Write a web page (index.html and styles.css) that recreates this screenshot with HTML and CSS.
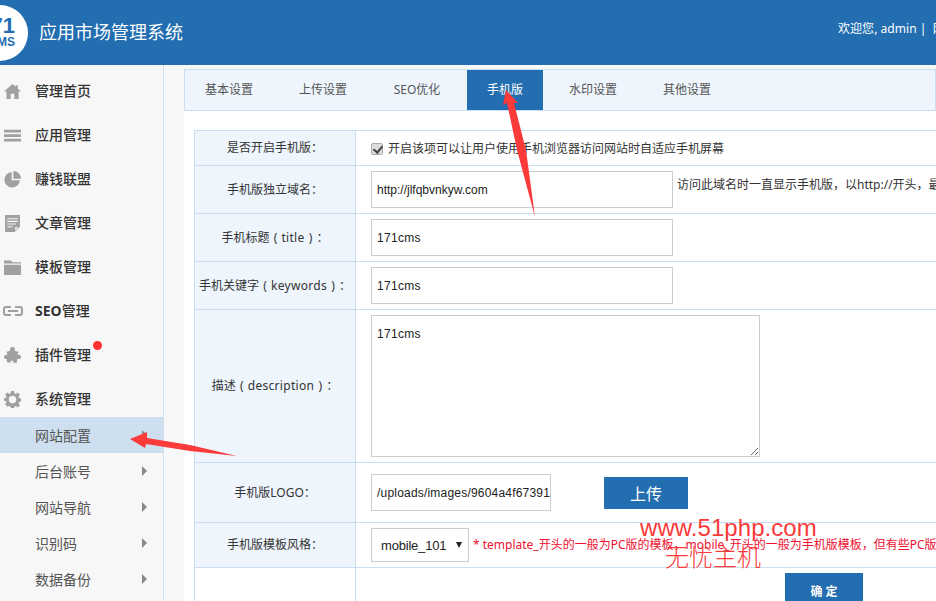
FILE: index.html
```html
<!DOCTYPE html>
<html lang="zh-CN">
<head>
<meta charset="utf-8">
<title>应用市场管理系统</title>
<link rel="stylesheet" href="styles.css">
</head>
<body>
<header class="topbar">
  <div class="logo"><span class="logo-num">71</span><span class="logo-ms">MS</span></div>
  <h1 class="title">应用市场管理系统</h1>
  <div class="welcome">欢迎您, admin&nbsp;|&nbsp;&nbsp;网站首页</div>
</header>
<div class="layout">
  <nav class="sidebar">
    <a class="nav-item"><svg class="ico" viewBox="0 0 16 16"><path d="M8 1 0 8h2.300v7h4V10h3.400v5h4V8H16l-3-2.600V2h-2v1.600z"/></svg>管理首页</a>
    <a class="nav-item"><svg class="ico" viewBox="0 0 16 16"><path d="M0 2.500h16v2.600H0zM0 6.800h16v2.600H0zM0 11h16v2.600H0z"/></svg>应用管理</a>
    <a class="nav-item"><svg class="ico" viewBox="0 0 16 16"><path d="M7.200 1a7.300 7.300 0 1 0 7.800 7.800H7.200zM8.800 0v7.200H16A7.400 7.400 0 0 0 8.800 0z"/></svg>赚钱联盟</a>
    <a class="nav-item"><svg class="ico" viewBox="0 0 16 16"><path fill-rule="evenodd" d="M1 0h14v11l-5 5H1zM3 3v1h10V3zM3 5.500v1h10v-1zM3 8v1h8V8zM3 10.500v1h5v-1zM10.500 11.500v3l3-3z"/></svg>文章管理</a>
    <a class="nav-item"><svg class="ico" viewBox="0 0 16 16"><path d="M0 1.500h6.500L8 3h8v1.300H0zM0 5.500h16V15H0z"/></svg>模板管理</a>
    <a class="nav-item"><svg class="ico ico-link" viewBox="0 0 20 10"><path fill="none" stroke="#a0a0a0" stroke-width="2" d="M8 1H3Q1 1 1 3v4q0 2 2 2h5M12 1h5q2 0 2 2v4q0 2-2 2h-5M5 5h10"/></svg><b class="seo">SEO</b>管理</a>
    <a class="nav-item"><svg class="ico" viewBox="0 0 16 16"><path d="M6 3.500C5 1.500 6.500 0 8 0s3 1.500 2 3.500l3.500 1-.6 3c1.700-.8 3.100.2 3.100 1.800s-1.500 2.700-3.400 1.700L12 15l-3.500-.5c.7-1.500-.2-1.500-1-1.500s-2 .5-1.300 2L2.500 14l.3-3C1.300 11.800 0 10.800 0 9.300s1.400-2.300 3-1.500L2.500 4.500z"/></svg>插件管理<i class="dot"></i></a>
    <a class="nav-item"><svg class="ico" viewBox="0 0 16 16"><path fill-rule="evenodd" d="M6.600 0h2.800l.4 2.200 1.300.6L13 1.500l2 2-1.300 1.900.6 1.300 2.200.4v2.800l-2.200.4-.6 1.300 1.300 1.900-2 2-1.900-1.300-1.300.6-.4 2.200H6.600l-.4-2.200-1.300-.6L3 14.500l-2-2 1.300-1.900-.6-1.300L-.5 9V6.800l2.200-.4.6-1.300L1 3.500l2-2 1.900 1.300 1.300-.6zM8 4.500a3.500 3.500 0 1 0 0 7 3.500 3.500 0 0 0 0-7z"/></svg>系统管理</a>
    <div class="sub-list">
      <a class="sub-item active">网站配置<i class="caret"></i></a>
      <a class="sub-item">后台账号<i class="caret"></i></a>
      <a class="sub-item">网站导航<i class="caret"></i></a>
      <a class="sub-item">识别码<i class="caret"></i></a>
      <a class="sub-item">数据备份<i class="caret"></i></a>
    </div>
  </nav>
  <main class="main">
    <div class="tabs">
      <a class="tab">基本设置</a>
      <a class="tab">上传设置</a>
      <a class="tab">SEO优化</a>
      <a class="tab on">手机版</a>
      <a class="tab">水印设置</a>
      <a class="tab">其他设置</a>
    </div>
    <div class="content">
      <table class="form">
        <tr class="r35"><th>是否开启手机版<span class="colon">：</span></th><td><label class="check-row"><input class="check" type="checkbox" checked>开启该项可以让用户使用手机浏览器访问网站时自适应手机屏幕</label></td></tr>
        <tr class="r48"><th>手机版独立域名<span class="colon">：</span></th><td><input class="field" type="text" value="http://jlfqbvnkyw.com"><span class="hint">访问此域名时一直显示手机版，以http://开头，最后不要带斜杠</span></td></tr>
        <tr class="r48"><th>手机标题<span class="pn">(</span><span class="lat">title</span><span class="pn">)</span><span class="colon">：</span></th><td><input class="field cms" type="text" value="171cms"></td></tr>
        <tr class="r48"><th>手机关键字<span class="pn">(</span><span class="lat">keywords</span><span class="pn">)</span><span class="colon">：</span></th><td><input class="field cms" type="text" value="171cms"></td></tr>
        <tr class="r153"><th>描述<span class="pn">(</span><span class="lat">description</span><span class="pn">)</span><span class="colon">：</span></th><td><textarea class="area">171cms</textarea></td></tr>
        <tr class="r60"><th>手机版LOGO<span class="colon">：</span></th><td><div class="upload-row"><input class="field short" type="text" value="/uploads/images/9604a4f67391a2b.png"><button class="btn-up" type="button">上传</button></div></td></tr>
        <tr class="r45"><th>手机版模板风格<span class="colon">：</span></th><td><span class="select-wrap"><select class="select"><option>mobile_101</option></select></span><span class="warn">* template_开头的一般为PC版的模板，mobile_开头的一般为手机版模板，但有些PC版模板也支持手机</span></td></tr>
        <tr class="r60 last"><th></th><td><button class="btn-ok" type="button">确 定</button></td></tr>
      </table>
    </div>
  </main>
</div>
<div class="wm wm-a">www.51php.com</div>
<div class="wm wm-b">无忧主机</div>
<svg class="arrows" width="936" height="601" viewBox="0 0 936 601">
  <path d="M506 90 518 103 514 103 526 150 535 217 517 150 507 103 503 105z" fill="#fb3a3a"/>
  <path d="M130 439 147 432 147 438 190 445 237 456 190 451 146 444 145 448z" fill="#fb3a3a"/>
</svg>
</body>
</html>
```
FILE: styles.css
```css
* { box-sizing: border-box; }
html, body { margin: 0; height: 601px; overflow: hidden; background: #f7f7f7; }
body { font-family: "Noto Sans", "Noto Sans CJK SC", sans-serif; font-size: 12px; color: #333; position: relative; width: 936px; text-spacing-trim: space-all; }

.topbar { height: 65px; background: #236db1; color: #fff; display: flex; align-items: center; overflow: hidden; }
.logo { flex: none; width: 56px; height: 56px; margin-left: -28px; border-radius: 50%; background: #fff; color: #236db1; display: flex; flex-direction: column; align-items: flex-end; padding: 10px 13px 0 0; font-family: "Liberation Sans", sans-serif; font-weight: 700; line-height: 1; }
.logo-num { font-size: 22px; }
.logo-ms { font-size: 12px; margin-top: -1px; }
.title { flex: none; margin: -4px 0 0 11px; width: 144px; font-size: 18px; font-weight: 400; white-space: nowrap; }
.welcome { flex: none; margin: -9px 0 0 655px; font-size: 12px; letter-spacing: .05px; white-space: nowrap; }

.layout { display: flex; height: 536px; }
.sidebar { flex: none; width: 164px; height: 536px; padding-top: 4px; border-right: 1px solid #cfe0ef; background: #f7f7f7; position: relative; }
.nav-item { display: flex; align-items: center; height: 44px; padding: 0 0 2px 4px; font-size: 14px; font-weight: 500; color: #333; position: relative; }
.ico { flex: none; width: 17px; height: 17px; margin: 2px 14px 0 0; fill: #a0a0a0; }
.ico-link { width: 20px; height: 10px; margin-left: -1px; margin-right: 12px; }
.seo { font-weight: 700; font-family: "Noto Sans", sans-serif; }
.dot { position: absolute; left: 93px; top: 8px; width: 9px; height: 9px; border-radius: 50%; background: #ff3030; }
.sub-list { margin-top: -4px; }
.sub-item { display: flex; align-items: center; height: 36px; padding: 0 16px 0 35px; font-size: 14px; color: #555; justify-content: space-between; }
.sub-item.active { background: #cee0ef; }
.caret { width: 0; height: 0; border-left: 5px solid #888; border-top: 5px solid transparent; border-bottom: 5px solid transparent; }

.main { flex: 1; min-width: 0; padding: 4px 0 0 20px; overflow: hidden; }
.tabs { display: flex; height: 42px; background: #eef5fd; border: 1px solid #c9dff1; color: #555; }
.tab { flex: none; min-width: 88px; height: 40px; line-height: 40px; padding: 0 20px; margin-right: 6px; font-size: 12px; text-align: center; }
.tab.on { min-width: 76px; background: #236db1; color: #fff; }
.content { height: 490px; background: #fff; padding: 19px 0 0 10px; }

.form { border-collapse: collapse; width: 1000px; table-layout: fixed; }
.form th, .form td { border: 1px solid #c9dff1; padding: 0; vertical-align: middle; }
.form th { width: 161px; padding-bottom: 2px; background: #eef5fd; font-size: 12px; font-weight: 400; color: #333; text-align: center; white-space: nowrap; }
.colon { font-family: "Noto Sans CJK TC", sans-serif; }
.pn { display: inline-block; width: 12px; text-align: center; }
.lat { letter-spacing: .3px; }
.form td { padding-left: 15px; white-space: nowrap; color: #333; }
.r35 { height: 35px; }
.r48 { height: 48px; }
.r153 { height: 153px; }
.r60 { height: 60px; }
.r45 { height: 45px; }
.last th { background: #fff; border-bottom: 0; }
.last td { vertical-align: top; padding-top: 5px; border-bottom: 0; }

.check-row { display: flex; align-items: center; }
.check { appearance: none; -webkit-appearance: none; flex: none; width: 12px; height: 12px; margin: 1px 5px 0 0; border: 1px solid #aaa; border-radius: 2px; background: #ddd; position: relative; }
.check::after { content: ""; position: absolute; left: 3px; top: 0; width: 4px; height: 7px; border: solid #444; border-width: 0 2px 2px 0; transform: rotate(40deg); }
.field { width: 302px; height: 37px; padding: 0 5px; border: 1px solid #ccc; background: #fff; font-family: "Liberation Sans", sans-serif; font-size: 12px; color: #222; outline: 0; vertical-align: middle; }
.field.cms { letter-spacing: .3px; }
.field.short { width: 180px; padding-right: 0; letter-spacing: .2px; }
.hint { display: inline-block; margin: -12px 0 0 4px; vertical-align: middle; font-size: 12px; }
.area { display: block; width: 389px; height: 142px; padding: 11px 5px; border: 1px solid #ccc; font-family: "Liberation Sans", sans-serif; font-size: 12px; letter-spacing: .3px; color: #222; outline: 0; }
.upload-row { display: flex; align-items: center; }
.btn-up { flex: none; width: 84px; height: 32px; margin-left: 53px; border: 0; background: #236db1; color: #fff; font-family: inherit; font-size: 16px; }
.select-wrap { display: inline-block; position: relative; vertical-align: middle; }
.select-wrap::after { content: ""; position: absolute; right: 7px; top: 14px; border-top: 6px solid #222; border-left: 3px solid transparent; border-right: 3px solid transparent; }
.select { appearance: none; -webkit-appearance: none; display: block; width: 98px; height: 34px; padding: 0 0 0 9px; border: 1px solid #ccc; border-radius: 0; background: #fff; font-family: "Liberation Sans", sans-serif; font-size: 13px; letter-spacing: -.2px; color: #222; }
.warn { margin-left: 4px; color: #f01030; font-size: 12px; vertical-align: middle; position: relative; top: -1px; }
.btn-ok { display: block; width: 78px; height: 36px; margin-left: 414px; border: 0; background: #236db1; color: #fff; font-family: inherit; font-size: 12px; font-weight: 700; }

.wm { position: absolute; color: #fb3a3a; white-space: nowrap; line-height: 1; }
.wm-a { left: 640px; top: 516px; font-family: "Liberation Sans", sans-serif; font-size: 24px; letter-spacing: .05px; }
.wm-b { left: 665px; top: 545px; font-size: 24px; font-weight: 300; }
.arrows { position: absolute; left: 0; top: 0; pointer-events: none; }
```
